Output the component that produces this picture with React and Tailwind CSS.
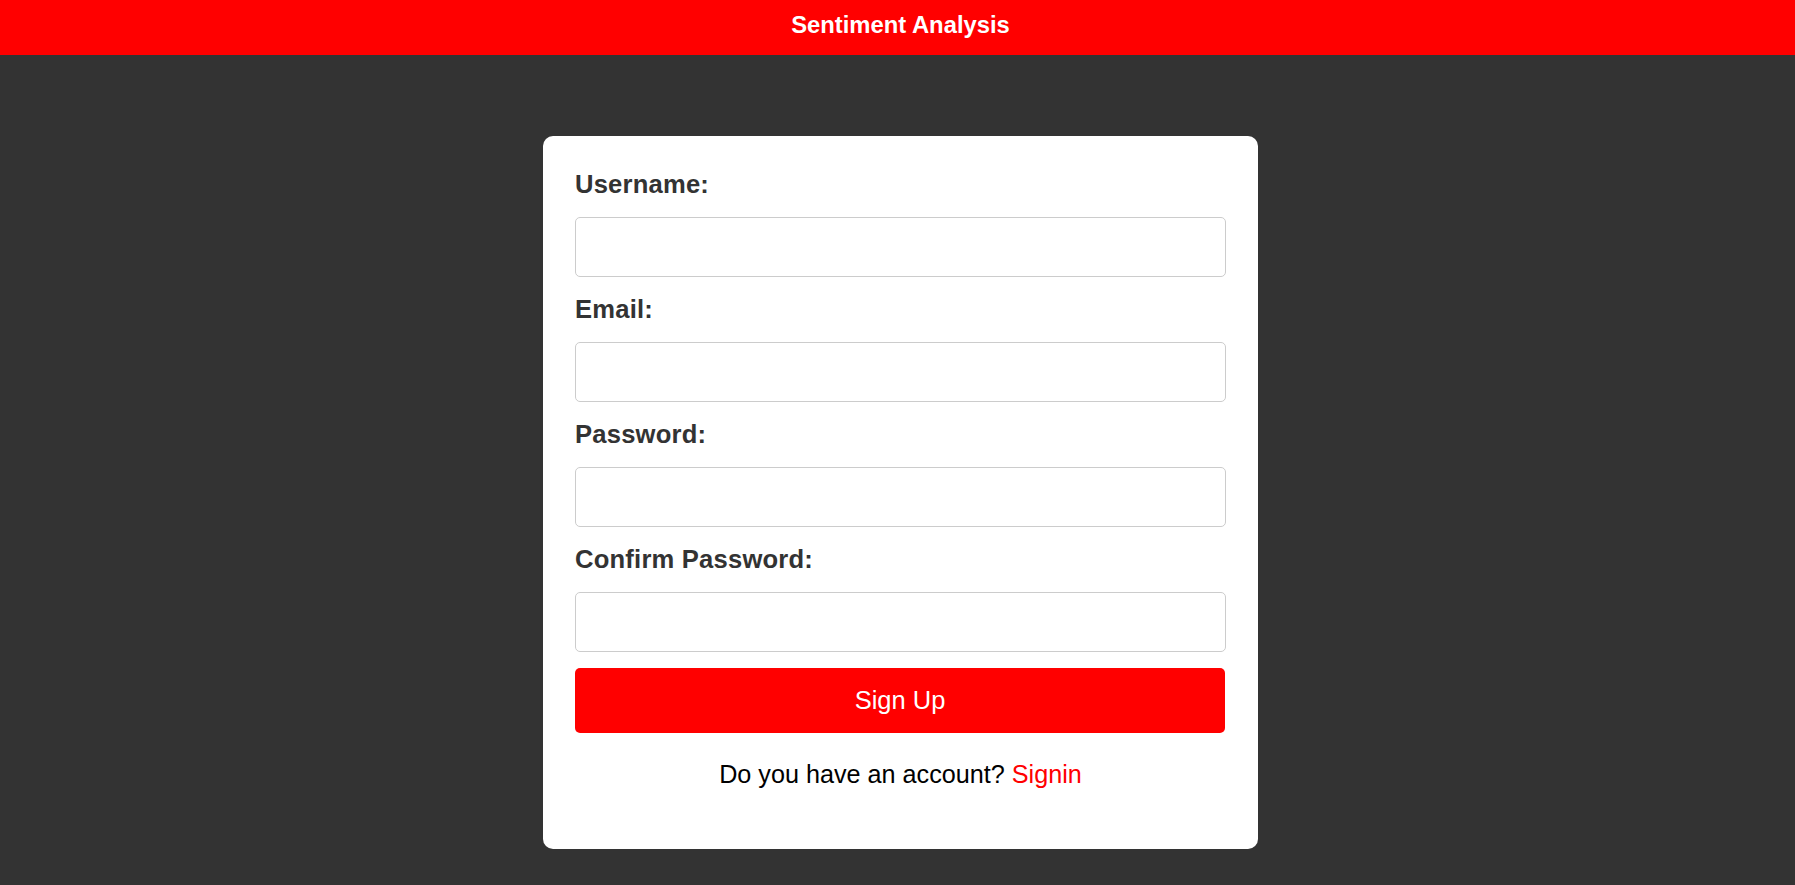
import React from "react";

const fields = [
  { id: "username", label: "Username:", type: "text" },
  { id: "email", label: "Email:", type: "email" },
  { id: "password", label: "Password:", type: "password" },
  { id: "confirm", label: "Confirm Password:", type: "password" },
];

export default function App() {
  return (
    <div className="min-h-screen bg-[#333333] font-['Liberation_Sans',Arial,sans-serif]">
      {/* HEADER */}
      <header className="h-[55px] bg-[#ff0000] flex items-center justify-center pl-[6px] pb-[5px]">
        <h1 className="text-white font-bold text-[23.8px] leading-none">
          Sentiment Analysis
        </h1>
      </header>

      {/* FORM CARD */}
      <main className="flex justify-center pt-[81px] pl-[6px]">
        <form
          className="w-[715px] bg-white rounded-[10px] px-8 pt-[34px] pb-[60px]"
          onSubmit={(e) => e.preventDefault()}
        >
          {fields.map((f) => (
            <div key={f.id} className="flex flex-col">
              <label
                htmlFor={f.id}
                className="text-[25.6px] font-bold text-[#333333] leading-[29px] tracking-[0.2px]"
              >
                {f.label}
              </label>
              <input
                id={f.id}
                type={f.type}
                className="mt-[18px] mb-[18px] h-[60px] w-full border border-[#cccccc] rounded-[5px] px-3 text-[20px] outline-none"
              />
            </div>
          ))}

          <button
            type="submit"
            className="-mt-[2px] w-[650px] h-[65px] bg-[#ff0000] text-white text-[25.5px] rounded-[5px]"
          >
            Sign Up
          </button>

          <p className="mt-[27px] text-center text-[25.2px] leading-[29px] text-black">
            Do you have an account?{" "}
            <a href="#" className="text-[#ff0000]">
              Signin
            </a>
          </p>
        </form>
      </main>
    </div>
  );
}
